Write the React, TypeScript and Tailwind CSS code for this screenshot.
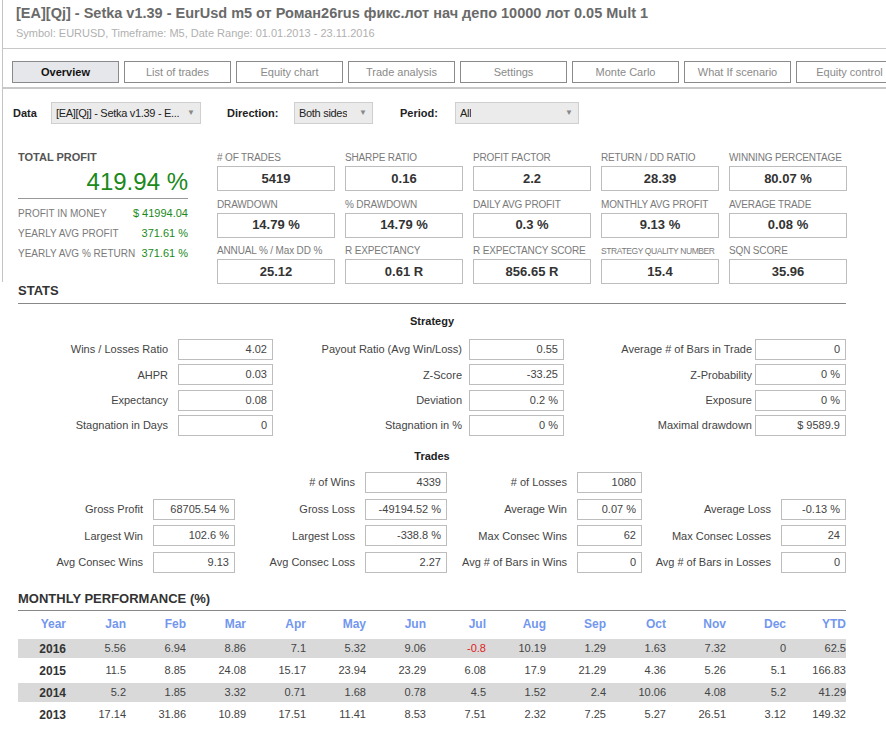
import React from "react";

const F = "font-['Liberation_Sans',Arial,sans-serif]";

function Select({ text, w }: { text: string; w: string }) {
  return (
    <div
      className={`${w} h-[22px] border border-[#cfcfcf] bg-[#ebebeb] flex items-center justify-between pl-[4px] pr-[5px] text-[11px] text-[#222]`}
    >
      <span className="whitespace-nowrap overflow-hidden tracking-[-0.3px]">{text}</span>
      <span className="text-[8px] text-[#888] ml-[3px] shrink-0">▼</span>
    </div>
  );
}

function Metric({ label, value, small }: { label: string; value: string; small?: boolean }) {
  return (
    <div className="w-[118px] flex flex-col">
      <div
        className={`h-[16px] leading-[16px] text-[#7a7a7a] whitespace-nowrap ${
          small ? "text-[8.5px] tracking-[-0.4px]" : "text-[10px] tracking-[-0.15px]"
        }`}
      >
        {label}
      </div>
      <div className="h-[25px] border border-[#bdbdbd] flex items-center justify-center text-[13px] font-bold text-[#333]">
        {value}
      </div>
    </div>
  );
}

function SBox({ v, w }: { v: string; w: string }) {
  return (
    <div
      className={`${w} h-[21px] border border-[#bdbdbd] bg-white text-right pr-[5px] text-[11px] leading-[19px] text-[#444] shrink-0`}
    >
      {v}
    </div>
  );
}

function SLabel({ t, w }: { t: string; w: string }) {
  return <div className={`${w} shrink-0 text-right text-[11px] text-[#444] whitespace-nowrap`}>{t}</div>;
}

const tabs = [
  "Overview",
  "List of trades",
  "Equity chart",
  "Trade analysis",
  "Settings",
  "Monte Carlo",
  "What If scenario",
  "Equity control",
];

const months = ["Jan", "Feb", "Mar", "Apr", "May", "Jun", "Jul", "Aug", "Sep", "Oct", "Nov", "Dec", "YTD"];
const rows: { y: string; v: string[]; gray: boolean }[] = [
  { y: "2016", v: ["5.56", "6.94", "8.86", "7.1", "5.32", "9.06", "-0.8", "10.19", "1.29", "1.63", "7.32", "0", "62.5"], gray: true },
  { y: "2015", v: ["11.5", "8.85", "24.08", "15.17", "23.94", "23.29", "6.08", "17.9", "21.29", "4.36", "5.26", "5.1", "166.83"], gray: false },
  { y: "2014", v: ["5.2", "1.85", "3.32", "0.71", "1.68", "0.78", "4.5", "1.52", "2.4", "10.06", "4.08", "5.2", "41.29"], gray: true },
  { y: "2013", v: ["17.14", "31.86", "10.89", "17.51", "11.41", "8.53", "7.51", "2.32", "7.25", "5.27", "26.51", "3.12", "149.32"], gray: false },
];

export default function App() {
  return (
    <div className={`w-[886px] h-[737px] bg-white overflow-hidden ${F}`}>
      <div className="border-l border-[#c4c4c4] ml-[2px]">
        {/* Header */}
        <div className="h-[49px] border-b border-[#c8c8c8] pl-[13px] pt-[4px]">
          <div className="text-[14.5px] leading-[18px] font-bold text-[#6a6a6a] whitespace-nowrap">
            [EA][Qj] - Setka v1.39 - EurUsd m5 от Роман26rus фикс.лот нач депо 10000 лот 0.05 Mult 1
          </div>
          <div className="mt-[4px] text-[11px] leading-[14px] text-[#b0b0b0]">
            Symbol: EURUSD, Timeframe: M5, Date Range: 01.01.2013 - 23.11.2016
          </div>
        </div>
        {/* Tabs */}
        <div className="h-[40px] border-b-2 border-[#c8c8c8] pt-[12px] pl-[9px] flex gap-[5px]">
          {tabs.map((t, i) => (
            <div
              key={t}
              className={`w-[107px] h-[22px] shrink-0 border border-[#8a8a8a] flex items-center justify-center text-[11px] ${
                i === 0 ? "bg-[#e5e7ea] font-bold text-[#111]" : "bg-white text-[#8a8a8a]"
              }`}
            >
              {t}
            </div>
          ))}
        </div>
        {/* Data row */}
        <div className="h-[60px] pt-[13px] pl-[10px] flex items-start">
          <div className="h-[22px] flex items-center text-[11px] font-bold text-[#222] w-[38px]">Data</div>
          <Select text="[EA][Qj] - Setka v1.39 - E..." w="w-[150px]" />
          <div className="h-[22px] flex items-center text-[11px] font-bold text-[#222] ml-[26px] w-[67px]">
            Direction:
          </div>
          <Select text="Both sides" w="w-[79px]" />
          <div className="h-[22px] flex items-center text-[11px] font-bold text-[#222] ml-[27px] w-[55px]">
            Period:
          </div>
          <Select text="All" w="w-[124px]" />
        </div>
        {/* Metrics */}
        <div className="flex pl-[15px] h-[133px] overflow-visible">
          <div className="w-[170px] flex flex-col">
            <div className="h-[16px] leading-[16px] text-[11px] font-bold text-[#555]">TOTAL PROFIT</div>
            <div className="h-[34px] flex items-center justify-end text-[24px] text-[#1b891b] border-b border-[#999]">
              419.94 %
            </div>
            <div className="flex justify-between items-center h-[20px] mt-[4px] text-[10px]">
              <span className="text-[#7a7a7a]">PROFIT IN MONEY</span>
              <span className="text-[11px] text-[#1b891b]">$ 41994.04</span>
            </div>
            <div className="flex justify-between items-center h-[20px] text-[10px]">
              <span className="text-[#7a7a7a]">YEARLY AVG PROFIT</span>
              <span className="text-[11px] text-[#1b891b]">371.61 %</span>
            </div>
            <div className="flex justify-between items-center h-[20px] text-[10px]">
              <span className="text-[#7a7a7a]">YEARLY AVG % RETURN</span>
              <span className="text-[11px] text-[#1b891b]">371.61 %</span>
            </div>
          </div>
          <div className="ml-[29px] mt-[1px] flex flex-col gap-[5.5px]">
            <div className="flex gap-[10px]">
              <Metric label="# OF TRADES" value="5419" />
              <Metric label="SHARPE RATIO" value="0.16" />
              <Metric label="PROFIT FACTOR" value="2.2" />
              <Metric label="RETURN / DD RATIO" value="28.39" />
              <Metric label="WINNING PERCENTAGE" value="80.07 %" />
            </div>
            <div className="flex gap-[10px]">
              <Metric label="DRAWDOWN" value="14.79 %" />
              <Metric label="% DRAWDOWN" value="14.79 %" />
              <Metric label="DAILY AVG PROFIT" value="0.3 %" />
              <Metric label="MONTHLY AVG PROFIT" value="9.13 %" />
              <Metric label="AVERAGE TRADE" value="0.08 %" />
            </div>
            <div className="flex gap-[10px]">
              <Metric label="ANNUAL % / Max DD %" value="25.12" />
              <Metric label="R EXPECTANCY" value="0.61 R" />
              <Metric label="R EXPECTANCY SCORE" value="856.65 R" />
              <Metric label="STRATEGY QUALITY NUMBER" value="15.4" small />
              <Metric label="SQN SCORE" value="35.96" />
            </div>
          </div>
        </div>
      </div>

      {/* STATS */}
      <div className="ml-[18px] w-[828px]">
        <div className="h-[18px] leading-[18px] text-[13px] font-bold text-[#333] border-b border-[#888] box-content pb-[3px]">
          STATS
        </div>
        <div className="h-[35px] flex items-center justify-center text-[11px] font-bold text-[#222]">
          Strategy
        </div>
        <div className="flex flex-col gap-[4.33px]">
          {[
            ["Wins / Losses Ratio", "4.02", "Payout Ratio (Avg Win/Loss)", "0.55", "Average # of Bars in Trade", "0"],
            ["AHPR", "0.03", "Z-Score", "-33.25", "Z-Probability", "0 %"],
            ["Expectancy", "0.08", "Deviation", "0.2 %", "Exposure", "0 %"],
            ["Stagnation in Days", "0", "Stagnation in %", "0 %", "Maximal drawdown", "$ 9589.9"],
          ].map((r) => (
            <div key={r[0]} className="flex items-center h-[21px]">
              <SLabel t={r[0]} w="w-[150px]" />
              <div className="w-[10px] shrink-0" />
              <SBox v={r[1]} w="w-[95px]" />
              <SLabel t={r[2]} w="w-[189px]" />
              <div className="w-[7px] shrink-0" />
              <SBox v={r[3]} w="w-[95px]" />
              <SLabel t={r[4]} w="w-[188px]" />
              <div className="w-[3px] shrink-0" />
              <SBox v={r[5]} w="w-[91px]" />
            </div>
          ))}
        </div>
        <div className="h-[36px] pt-[4px] flex items-center justify-center text-[11px] font-bold text-[#222]">
          Trades
        </div>
        <div className="flex flex-col gap-[5.7px]">
          <div className="flex items-center h-[21px]">
            <div className="w-[217px] shrink-0" />
            <SLabel t="# of Wins" w="w-[120px]" />
            <div className="w-[10px] shrink-0" />
            <SBox v="4339" w="w-[82px]" />
            <SLabel t="# of Losses" w="w-[120px]" />
            <div className="w-[10px] shrink-0" />
            <SBox v="1080" w="w-[65px]" />
          </div>
          {[
            ["Gross Profit", "68705.54 %", "Gross Loss", "-49194.52 %", "Average Win", "0.07 %", "Average Loss", "-0.13 %"],
            ["Largest Win", "102.6 %", "Largest Loss", "-338.8 %", "Max Consec Wins", "62", "Max Consec Losses", "24"],
            ["Avg Consec Wins", "9.13", "Avg Consec Loss", "2.27", "Avg # of Bars in Wins", "0", "Avg # of Bars in Losses", "0"],
          ].map((r) => (
            <div key={r[0]} className="flex items-center h-[21px]">
              <SLabel t={r[0]} w="w-[125px]" />
              <div className="w-[10px] shrink-0" />
              <SBox v={r[1]} w="w-[82px]" />
              <SLabel t={r[2]} w="w-[120px]" />
              <div className="w-[10px] shrink-0" />
              <SBox v={r[3]} w="w-[82px]" />
              <SLabel t={r[4]} w="w-[120px]" />
              <div className="w-[10px] shrink-0" />
              <SBox v={r[5]} w="w-[65px]" />
              <SLabel t={r[6]} w="w-[129px]" />
              <div className="w-[10px] shrink-0" />
              <SBox v={r[7]} w="w-[65px]" />
            </div>
          ))}
        </div>

        {/* Monthly */}
        <div className="mt-[17px] h-[18px] leading-[18px] text-[13px] font-bold text-[#333] border-b border-[#888] box-content pb-[2px]">
          MONTHLY PERFORMANCE (%)
        </div>
        <div className="mt-[3px] flex h-[19px] items-center text-[12px] font-bold text-[#7397ee]">
          <div className="w-[48px] text-right">Year</div>
          {months.map((m) => (
            <div key={m} className="w-[60px] text-right">
              {m}
            </div>
          ))}
        </div>
        <div className="mt-[6px] flex flex-col gap-[3px]">
          {rows.map((r) => (
            <div key={r.y} className={`flex h-[19px] items-center ${r.gray ? "bg-[#d9d9d9]" : "bg-white"}`}>
              <div className="w-[48px] text-right text-[12px] font-bold text-[#333]">{r.y}</div>
              {r.v.map((v, i) => (
                <div
                  key={i}
                  className={`w-[60px] text-right text-[11px] ${v.startsWith("-") ? "text-[#e01b1b]" : "text-[#444]"}`}
                >
                  {v}
                </div>
              ))}
            </div>
          ))}
        </div>
      </div>
    </div>
  );
}
